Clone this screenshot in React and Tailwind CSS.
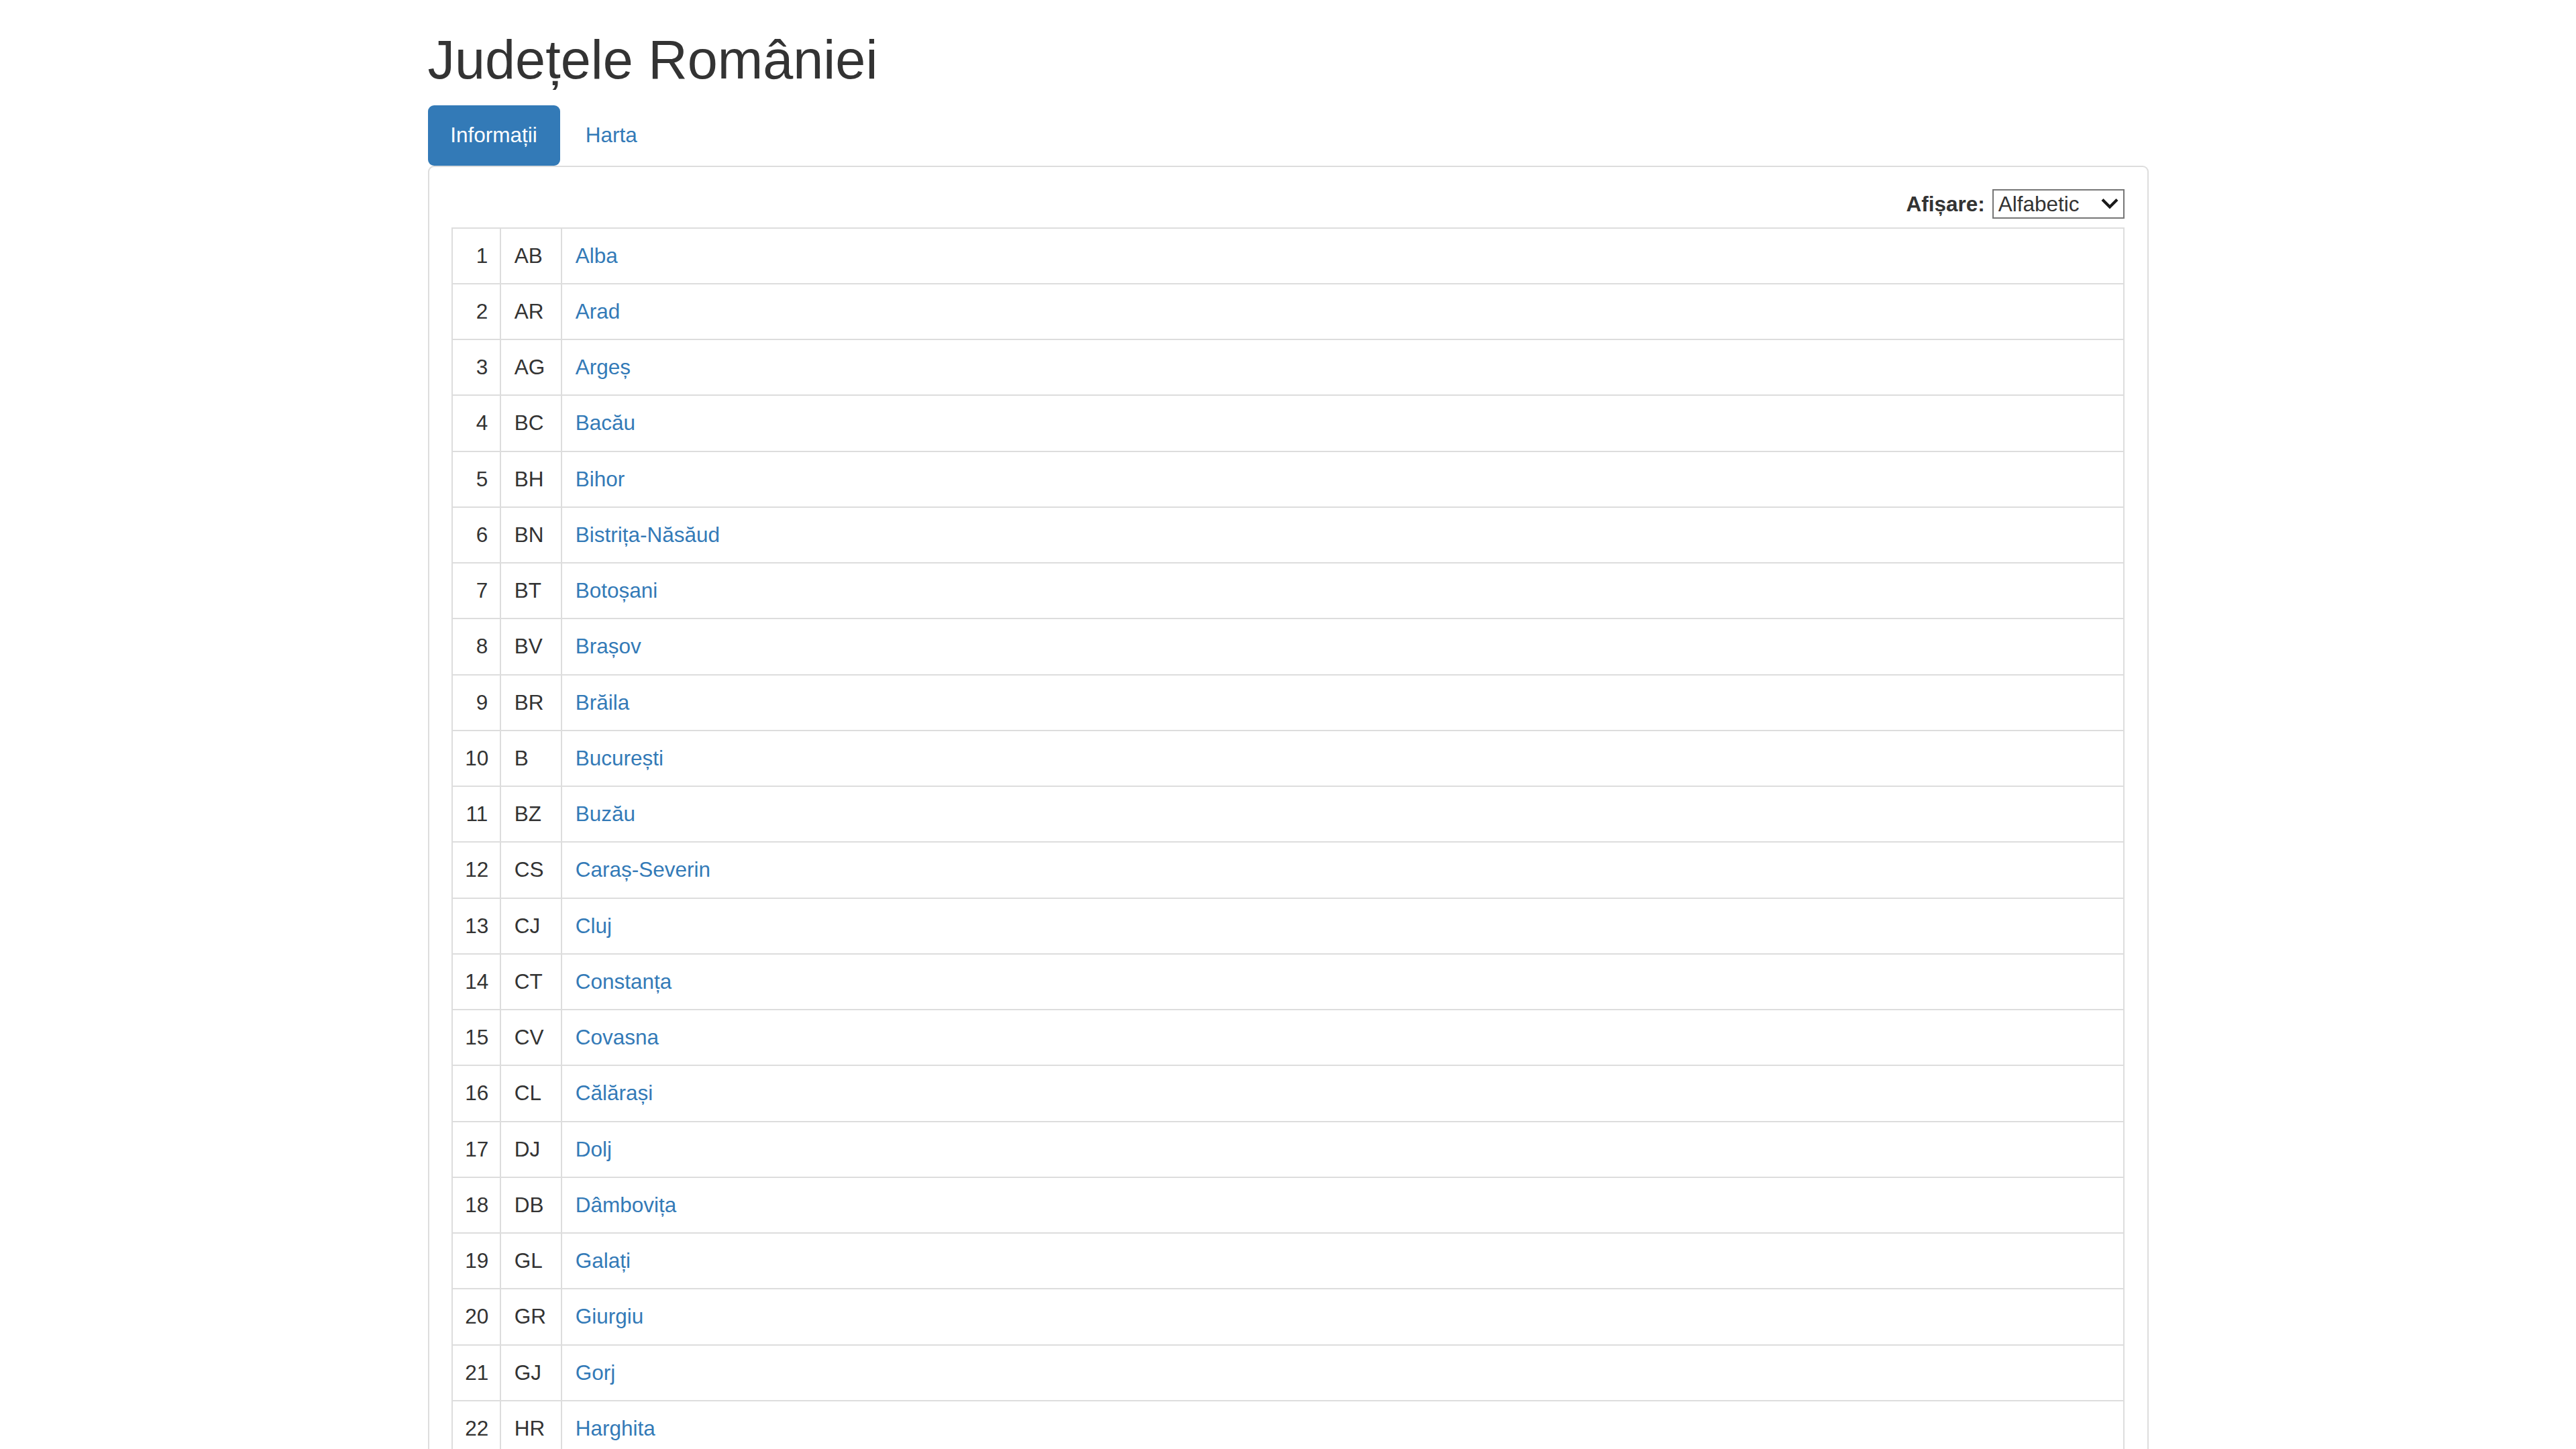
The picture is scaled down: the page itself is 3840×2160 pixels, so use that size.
import React from "react";

const judete = [
  ["AB", "Alba"], ["AR", "Arad"], ["AG", "Argeș"], ["BC", "Bacău"], ["BH", "Bihor"],
  ["BN", "Bistrița-Năsăud"], ["BT", "Botoșani"], ["BV", "Brașov"], ["BR", "Brăila"],
  ["B", "București"], ["BZ", "Buzău"], ["CS", "Caraș-Severin"], ["CJ", "Cluj"],
  ["CT", "Constanța"], ["CV", "Covasna"], ["CL", "Călărași"], ["DJ", "Dolj"],
  ["DB", "Dâmbovița"], ["GL", "Galați"], ["GR", "Giurgiu"], ["GJ", "Gorj"],
  ["HR", "Harghita"], ["HD", "Hunedoara"], ["IL", "Ialomița"], ["IS", "Iași"],
  ["IF", "Ilfov"], ["MM", "Maramureș"], ["MH", "Mehedinți"], ["MS", "Mureș"],
  ["NT", "Neamț"], ["OT", "Olt"], ["PH", "Prahova"], ["SM", "Satu Mare"],
  ["SJ", "Sălaj"], ["SB", "Sibiu"], ["SV", "Suceava"], ["TR", "Teleorman"],
  ["TM", "Timiș"], ["TL", "Tulcea"], ["VS", "Vaslui"], ["VL", "Vâlcea"], ["VN", "Vrancea"],
];

export default function App() {
  return (
    <div className="min-h-screen bg-white font-['Liberation_Sans',Arial,sans-serif] text-[31.5px] leading-[45px] text-[#333]">
      <div className="mx-auto w-[2632.5px] px-[33.75px]">
        <h1 className="mt-[45px] mb-[22.5px] text-[81px] leading-[1.1] font-medium text-[#333]">
          Județele României
        </h1>
        <ul className="flex">
          <li>
            <a className="block rounded-[9px] bg-[#337ab7] px-[33.75px] py-[22.5px] text-white">
              Informații
            </a>
          </li>
          <li className="ml-[4.5px]">
            <a className="block rounded-[9px] px-[33.75px] py-[22.5px] text-[#337ab7]">
              Harta
            </a>
          </li>
        </ul>
        <div className="rounded-[9px] border-2 border-[#ddd] p-[33.75px]">
          <div className="mb-[11.25px] flex h-[45px] items-center justify-end gap-[11px]">
            <label className="font-bold">Afișare:</label>
            <div className="relative">
              <select className="h-[44px] w-[197px] appearance-none rounded-none border-2 border-[#767676] bg-white pl-[7px] text-[31.5px] leading-[38px] text-[#333] outline-none">
                <option>Alfabetic</option>
                <option>Cod</option>
              </select>
              <svg
                className="pointer-events-none absolute right-[9px] top-[13px]"
                width="26"
                height="17"
                viewBox="0 0 26 17"
                fill="none"
              >
                <path d="M2 2.5 L13 13.5 L24 2.5" stroke="#1a1a1a" strokeWidth="4.2" />
              </svg>
            </div>
          </div>
          <table className="w-full table-fixed border-collapse border-2 border-[#ddd]">
            <colgroup>
              <col className="w-[72px]" />
              <col className="w-[91px]" />
              <col />
            </colgroup>
            <tbody>
              {judete.map(([cod, nume], i) => (
                <tr key={cod}>
                  <td className="border-2 border-[#ddd] px-[18px] py-[18.125px] text-right whitespace-nowrap">{i + 1}</td>
                  <td className="border-2 border-[#ddd] pl-[19.5px] pr-[16.5px] py-[18.125px] whitespace-nowrap">{cod}</td>
                  <td className="border-2 border-[#ddd] pl-[19.5px] pr-[18px] py-[18.125px]">
                    <a className="text-[#337ab7]">{nume}</a>
                  </td>
                </tr>
              ))}
            </tbody>
          </table>
        </div>
      </div>
    </div>
  );
}
